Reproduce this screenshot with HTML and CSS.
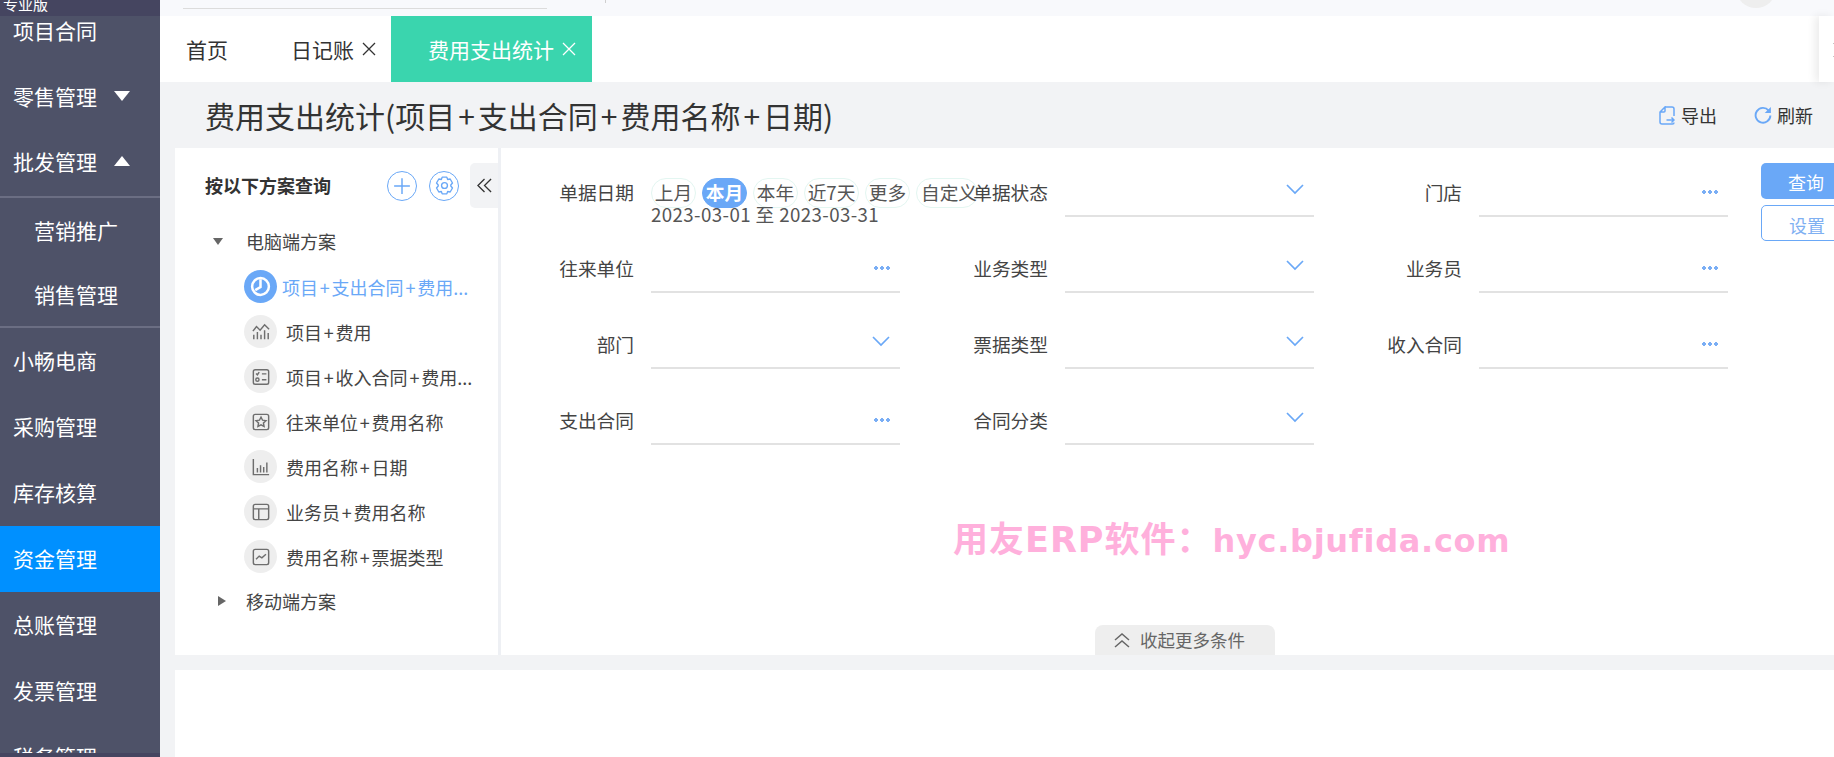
FILE: index.html
```html
<!DOCTYPE html>
<html lang="zh-CN">
<head>
<meta charset="utf-8">
<title>费用支出统计</title>
<link rel="stylesheet" href="styles.css">
</head>
<body>
<div class="app">
  <aside class="sidebar">
    <div class="brand"><span>专业版</span></div>
    <nav class="menu">
      <div class="menu-item">项目合同</div>
      <div class="menu-item">零售管理<i class="tri tri-down"></i></div>
      <div class="menu-item rule-top">批发管理<i class="tri tri-up"></i></div>
      <div class="menu-item sub">营销推广</div>
      <div class="menu-item sub rule-end">销售管理</div>
      <div class="menu-item">小畅电商</div>
      <div class="menu-item">采购管理</div>
      <div class="menu-item">库存核算</div>
      <div class="menu-item active">资金管理</div>
      <div class="menu-item">总账管理</div>
      <div class="menu-item">发票管理</div>
      <div class="menu-item">税务管理</div>
    </nav>
    <div class="side-foot"></div>
  </aside>
  <main class="main">
    <div class="topstrip">
      <div class="topline"></div>
      <div class="toptick"></div>
      <div class="avatar"></div>
    </div>
    <div class="tabs">
      <div class="tab tab-home">首页</div>
      <div class="tab tab-diary">日记账<svg class="close" viewBox="0 0 14 14"><path d="M1 1l12 12M13 1L1 13"/></svg></div>
      <div class="tab tab-active">费用支出统计<svg class="close" viewBox="0 0 14 14"><path d="M1 1l12 12M13 1L1 13"/></svg></div>
      <div class="tabs-end"></div>
    </div>
    <header class="titlebar">
      <h1 class="title">费用支出统计(项目<span class="plus">+</span>支出合同<span class="plus">+</span>费用名称<span class="plus">+</span>日期)</h1>
      <div class="tools">
        <span class="tool"><svg class="tool-icon" viewBox="0 0 16 19"><path d="M6 1h7a2 2 0 0 1 2 2v7M15 16.500a1.500 1.500 0 0 1-1.500 1.500H3a2 2 0 0 1-2-2V6L6 1v4a1 1 0 0 1-1 1H1"/><path d="M7.500 14h7.500M12.500 11.500l2.500 2.500-2.500 2.500"/></svg>导出</span>
        <span class="tool"><svg class="tool-icon refresh" viewBox="0 0 19 19"><path d="M15.500 4.800A7.800 7.800 0 1 0 17.300 10"/><path class="fill" d="M17.800 1v6.500h-6.500z"/></svg>刷新</span>
      </div>
    </header>
    <section class="query">
      <div class="scheme">
        <div class="scheme-head">
          <span class="scheme-title">按以下方案查询</span>
          <span class="round-btn"><svg viewBox="0 0 16 16"><path d="M8 1v14M1 8h14"/></svg></span>
          <span class="round-btn"><svg class="gear" viewBox="0 0 20 20"><path d="M7.800 2h4.400l.8 2.300 2.400-.5 2.200 3.800-1.600 1.900 0 1 1.600 1.900-2.200 3.800-2.400-.5-.8 2.300H7.800L7 15.700l-2.400.5-2.200-3.800L4 10.500v-1L2.400 7.600l2.200-3.800 2.400.5z" stroke-linejoin="round"/><circle cx="10" cy="10" r="2.800"/></svg></span>
          <span class="collapse"><svg viewBox="0 0 16 16"><path d="M8 1L1 8l7 7M15 1L8 8l7 7"/></svg></span>
        </div>
        <div class="tree-group"><i class="caret caret-down"></i>电脑端方案</div>
        <ul class="tree">
          <li class="tree-item current"><span class="ico"><svg viewBox="0 0 20 20"><circle cx="10" cy="10" r="8"/><path d="M10 3v7.500l-5 3"/></svg></span><span class="tree-text">项目<span class="plus">+</span>支出合同<span class="plus">+</span>费用...</span></li>
          <li class="tree-item"><span class="ico"><svg viewBox="0 0 20 20"><path d="M1 9l4-5 4 4 5-6 5 5"/><path d="M2 13v5M6 10v8M10 13v5M14 8v10M18 11v7"/></svg></span><span class="tree-text">项目<span class="plus">+</span>费用</span></li>
          <li class="tree-item"><span class="ico"><svg viewBox="0 0 20 20"><rect x="1.500" y="2" width="17" height="16" rx="2"/><path d="M4.500 6l1.500 1.500 2-3M11 6.500h5M11 13h5"/><circle cx="6" cy="13" r="1.800"/></svg></span><span class="tree-text">项目<span class="plus">+</span>收入合同<span class="plus">+</span>费用...</span></li>
          <li class="tree-item"><span class="ico"><svg viewBox="0 0 20 20"><rect x="1.500" y="1.500" width="17" height="17" rx="2"/><path d="M10 4.500l1.700 3.500 3.800.5-2.800 2.600.7 3.800-3.400-1.800-3.400 1.800.7-3.800-2.800-2.600 3.800-.5z"/></svg></span><span class="tree-text">往来单位<span class="plus">+</span>费用名称</span></li>
          <li class="tree-item"><span class="ico"><svg viewBox="0 0 20 20"><path d="M1.500 1v17.500H19"/><path d="M6 11v5M9.500 8v8M13 10v6M16.500 5v11"/></svg></span><span class="tree-text">费用名称<span class="plus">+</span>日期</span></li>
          <li class="tree-item"><span class="ico"><svg viewBox="0 0 20 20"><rect x="1.500" y="1.500" width="17" height="17" rx="2"/><path d="M1.500 6.500h17M7.500 6.500v12"/></svg></span><span class="tree-text">业务员<span class="plus">+</span>费用名称</span></li>
          <li class="tree-item"><span class="ico"><svg viewBox="0 0 20 20"><rect x="1.500" y="1.500" width="17" height="17" rx="2"/><path d="M4.500 12.500l3.500-3.500 3 2 4.500-4"/></svg></span><span class="tree-text">费用名称<span class="plus">+</span>票据类型</span></li>
        </ul>
        <div class="tree-group mobile"><i class="caret caret-right"></i>移动端方案</div>
      </div>
      <div class="filter">
        <div class="filter-top">
          <div class="fields">
            <div class="field">
              <label class="field-label">单据日期</label>
              <div class="dates">
                <div class="pills">
                  <span class="pill">上月</span><span class="pill on">本月</span><span class="pill">本年</span><span class="pill">近7天</span><span class="pill">更多</span><span class="pill wide">自定义</span>
                </div>
                <div class="date-range">2023-03-01 至 2023-03-31</div>
              </div>
            </div>
            <div class="field"><label class="field-label">单据状态</label><div class="input"><svg class="chev" viewBox="0 0 18 11"><path d="M1 1l8 8 8-8"/></svg></div></div>
            <div class="field"><label class="field-label">门店</label><div class="input"><span class="dots"></span></div></div>
            <div class="field"><label class="field-label">往来单位</label><div class="input"><span class="dots"></span></div></div>
            <div class="field"><label class="field-label">业务类型</label><div class="input"><svg class="chev" viewBox="0 0 18 11"><path d="M1 1l8 8 8-8"/></svg></div></div>
            <div class="field"><label class="field-label">业务员</label><div class="input"><span class="dots"></span></div></div>
            <div class="field"><label class="field-label">部门</label><div class="input"><svg class="chev" viewBox="0 0 18 11"><path d="M1 1l8 8 8-8"/></svg></div></div>
            <div class="field"><label class="field-label">票据类型</label><div class="input"><svg class="chev" viewBox="0 0 18 11"><path d="M1 1l8 8 8-8"/></svg></div></div>
            <div class="field"><label class="field-label">收入合同</label><div class="input"><span class="dots"></span></div></div>
            <div class="field"><label class="field-label">支出合同</label><div class="input"><span class="dots"></span></div></div>
            <div class="field"><label class="field-label">合同分类</label><div class="input"><svg class="chev" viewBox="0 0 18 11"><path d="M1 1l8 8 8-8"/></svg></div></div>
          </div>
          <div class="actions">
            <button class="btn primary">查询</button>
            <button class="btn ghost">设置</button>
          </div>
        </div>
        <div class="watermark"><span class="wm-head">用友ERP软件：</span>hyc.bjufida.com</div>
        <div class="fold"><svg viewBox="0 0 16 16"><path d="M1 8l7-6 7 6M1 15l7-6 7 6"/></svg>收起更多条件</div>
      </div>
    </section>
    <section class="results"></section>
  </main>
</div>
</body>
</html>
```
FILE: styles.css
```css
* { box-sizing: border-box; }
html, body { margin: 0; height: 100%; overflow: hidden; }
body {
  font-family: "Noto Sans CJK SC", "Noto Sans", sans-serif;
  color: #333;
  background: #f2f3f5;
}
.app { display: flex; height: 757px; width: 1834px; overflow: hidden; }
.plus { margin: 0 .1em; }

/* sidebar */
.sidebar { width: 160px; flex: none; display: flex; flex-direction: column; background: #4e5268; color: #fff; }
.brand { height: 16px; flex: none; background: #454560; overflow: hidden; padding-left: 3px; font-size: 15px; line-height: 8px; }
.brand span { display: block; }
.menu { flex: 1; min-height: 0; overflow: hidden; }
.menu-item { height: 66px; display: flex; align-items: center; padding: 0 0 2px 13px; font-size: 21px; line-height: 30px; }
.menu-item:first-child { margin-top: -18px; }
.menu-item.sub { padding-left: 34px; }
.rule-top { height: 68px; padding-bottom: 4px; border-bottom: 2px solid #6b6e83; }
.menu-item.rule-end { height: 64px; padding-bottom: 2px; border-bottom: 2px solid #6b6e83; }
.menu-item.active { background: #0090ff; }
.tri { margin-left: 17px; width: 0; height: 0; border-left: 8px solid transparent; border-right: 8px solid transparent; }
.tri-down { border-top: 10px solid #fff; }
.tri-up { border-bottom: 10px solid #fff; }
.side-foot { height: 4px; flex: none; background: #454560; }

/* main */
.main { flex: 1; min-width: 0; display: flex; flex-direction: column; }
.topstrip { height: 16px; flex: none; background: #f8f9fc; display: flex; overflow: hidden; }
.topline { width: 364px; height: 1px; margin: 8px 0 0 23px; background: #dcdcdc; }
.toptick { width: 1px; height: 3px; margin-left: 58px; background: #cfcfcf; }
.avatar { width: 40px; height: 40px; border-radius: 50%; background: #eeeeee; margin: -32px 0 0 1130px; }

.tabs { height: 66px; flex: none; display: flex; background: #fff; font-size: 21px; color: #333; }
.tab { display: flex; align-items: center; padding-bottom: 1px; }
.tab-home { width: 131px; padding-left: 26px; }
.tab-diary { width: 100px; }
.tab-active { width: 201px; padding-left: 37px; background: #3ad5ae; color: #fff; }
.close { width: 14px; height: 14px; margin-left: 8px; fill: none; stroke: currentColor; stroke-width: 1.300; }
.tabs-end { width: 15px; margin-left: auto; background: #fff; box-shadow: -4px 0 8px rgba(0, 0, 0, .08); display: flex; align-items: flex-start; justify-content: flex-end; }
.tabs-end::after { content: ""; width: 1px; height: 1px; margin-top: 27px; background: #c4c4c4; box-shadow: 0 13px 0 #c4c4c4; }

.titlebar { height: 66px; flex: none; display: flex; align-items: center; padding-left: 45px; }
.title { margin: 0; font-size: 30px; font-weight: 400; color: #333; line-height: 40px; }
.tools { margin-left: auto; display: flex; padding-right: 21px; gap: 37px; }
.tool { display: flex; align-items: center; font-size: 18px; color: #333; }
.tool-icon { width: 16px; height: 19px; margin-right: 6px; fill: none; stroke: #6aa8f7; stroke-width: 1.500; }
.tool-icon.refresh { width: 18px; height: 18px; margin-right: 5px; stroke-width: 2; }
.tool-icon .fill { fill: #6aa8f7; stroke: none; }

/* query panel */
.query { height: 507px; flex: none; display: flex; margin-left: 15px; }
.scheme { width: 326px; flex: none; background: #fff; border-right: 3px solid #eef0f4; padding: 15px 0 0 30px; }
.scheme-head { height: 45px; display: flex; align-items: center; position: relative; }
.scheme-title { font-size: 18px; font-weight: 700; width: 182px; color: #333; padding-bottom: 2px; }
.round-btn { width: 30px; height: 30px; margin-right: 12px; border: 1px solid #6aa8f7; border-radius: 50%; display: flex; align-items: center; justify-content: center; }
.round-btn svg { width: 18px; height: 18px; fill: none; stroke: #6aa8f7; stroke-width: 1.300; }
.round-btn svg.gear { width: 21px; height: 21px; }
.collapse { position: absolute; right: 0; top: 0; width: 28px; height: 45px; background: #f2f3f5; border-radius: 5px 0 0 5px; display: flex; align-items: center; justify-content: center; }
.collapse svg { width: 15px; height: 15px; fill: none; stroke: #333; stroke-width: 1.400; }

.tree-group { display: flex; align-items: center; height: 30px; margin-top: 18px; font-size: 18px; color: #444; margin-left: -8px; }
.mobile { margin-top: 7px; }
.caret { width: 0; height: 0; flex: none; }
.caret-down { margin: 0 23px 0 16px; border-left: 5px solid transparent; border-right: 5px solid transparent; border-top: 7px solid #666; }
.caret-right { margin: 0 20px 0 21px; border-top: 5px solid transparent; border-bottom: 5px solid transparent; border-left: 8px solid #666; }
.tree { list-style: none; margin: 8px 0 0; padding: 0 0 0 39px; }
.tree-item { height: 45px; display: flex; align-items: center; font-size: 18px; color: #444; white-space: nowrap; }
.ico { width: 33px; height: 33px; flex: none; border-radius: 50%; background: #eeeeee; display: flex; align-items: center; justify-content: center; margin-right: 9px; }
.ico svg { width: 18px; height: 18px; fill: none; stroke: #6e6e6e; stroke-width: 1.600; }
.current { color: #6aa8f7; }
.current .ico { background: #6aa8f7; margin-right: 5px; }
.current .ico svg { width: 21px; height: 21px; stroke: #fff; stroke-width: 2.400; }

.filter { flex: 1; min-width: 0; background: #fff; display: flex; flex-direction: column; position: relative; }
.filter-top { display: flex; padding-top: 9px; }
.fields { display: grid; grid-template-columns: repeat(3, 399px); column-gap: 15px; row-gap: 16px; flex: none; }
.field { display: flex; height: 60px; }
.field-label { width: 133px; flex: none; margin-right: 17px; text-align: right; font-size: 18.700px; line-height: 30px; padding-top: 20px; box-sizing: content-box; height: 30px; color: #444; }
.input { width: 249px; height: 60px; border-bottom: 2px solid #e2e2e2; display: flex; justify-content: flex-end; align-items: flex-start; padding-right: 10px; }
.chev { width: 18px; height: 11px; margin-top: 27px; fill: none; stroke: #6aa8f7; stroke-width: 1.700; }
.dots { width: 16px; height: 4px; margin-top: 33px; background: radial-gradient(circle at 2px 2px, #7aaef5 1.600px, transparent 2.100px) 0 0 / 6px 4px repeat-x; }
.dates { width: 249px; padding-top: 21px; }
.pills { display: flex; gap: 6px; width: 340px; }
.pill { width: 45px; height: 30px; flex: none; border: 1px solid #e3f6f1; border-radius: 15px; font-size: 18.700px; line-height: 26px; text-align: center; color: #555; white-space: nowrap; }
.pill.on { background: #6aa8f7; border-color: #6aa8f7; color: #fff; font-weight: 700; }
.pill:nth-child(4) { width: 55px; }
.pill.wide { width: 62px; padding-left: 4px; text-align: left; }
.date-range { margin-top: -5px; font-size: 18.700px; line-height: 22px; color: #555; white-space: nowrap; letter-spacing: .4px; }

.actions { margin-left: 33px; padding-top: 6px; display: flex; flex-direction: column; gap: 6px; flex: none; width: 100px; }
.btn { width: 100px; height: 36px; padding: 1px 0 0 27px; text-align: left; font: inherit; font-size: 18px; border-radius: 5px; }
.primary { background: #6aa8f7; border: 0; color: #fff; }
.ghost { background: #fff; border: 1px solid #6aa8f7; color: #7fb0f2; padding-top: 3px; }

.watermark { position: absolute; left: 452px; top: 368px; font-family: "DejaVu Sans", "Noto Sans CJK SC", sans-serif; font-size: 32px; font-weight: 700; line-height: 48px; letter-spacing: .7px; color: #ffb0dc; white-space: nowrap; }
.wm-head { font-size: 35px; letter-spacing: 1px; }
.fold { margin-top: auto; margin-left: 594px; width: 180px; height: 30px; background: #eeeeee; border-radius: 8px 8px 0 0; display: flex; align-items: center; padding: 0 0 1px 19px; font-size: 17.500px; color: #666; }
.fold svg { width: 16px; height: 16px; margin-right: 10px; fill: none; stroke: #666; stroke-width: 1.500; }

.results { flex: 1; margin: 15px 0 0 15px; background: #fff; }
```
